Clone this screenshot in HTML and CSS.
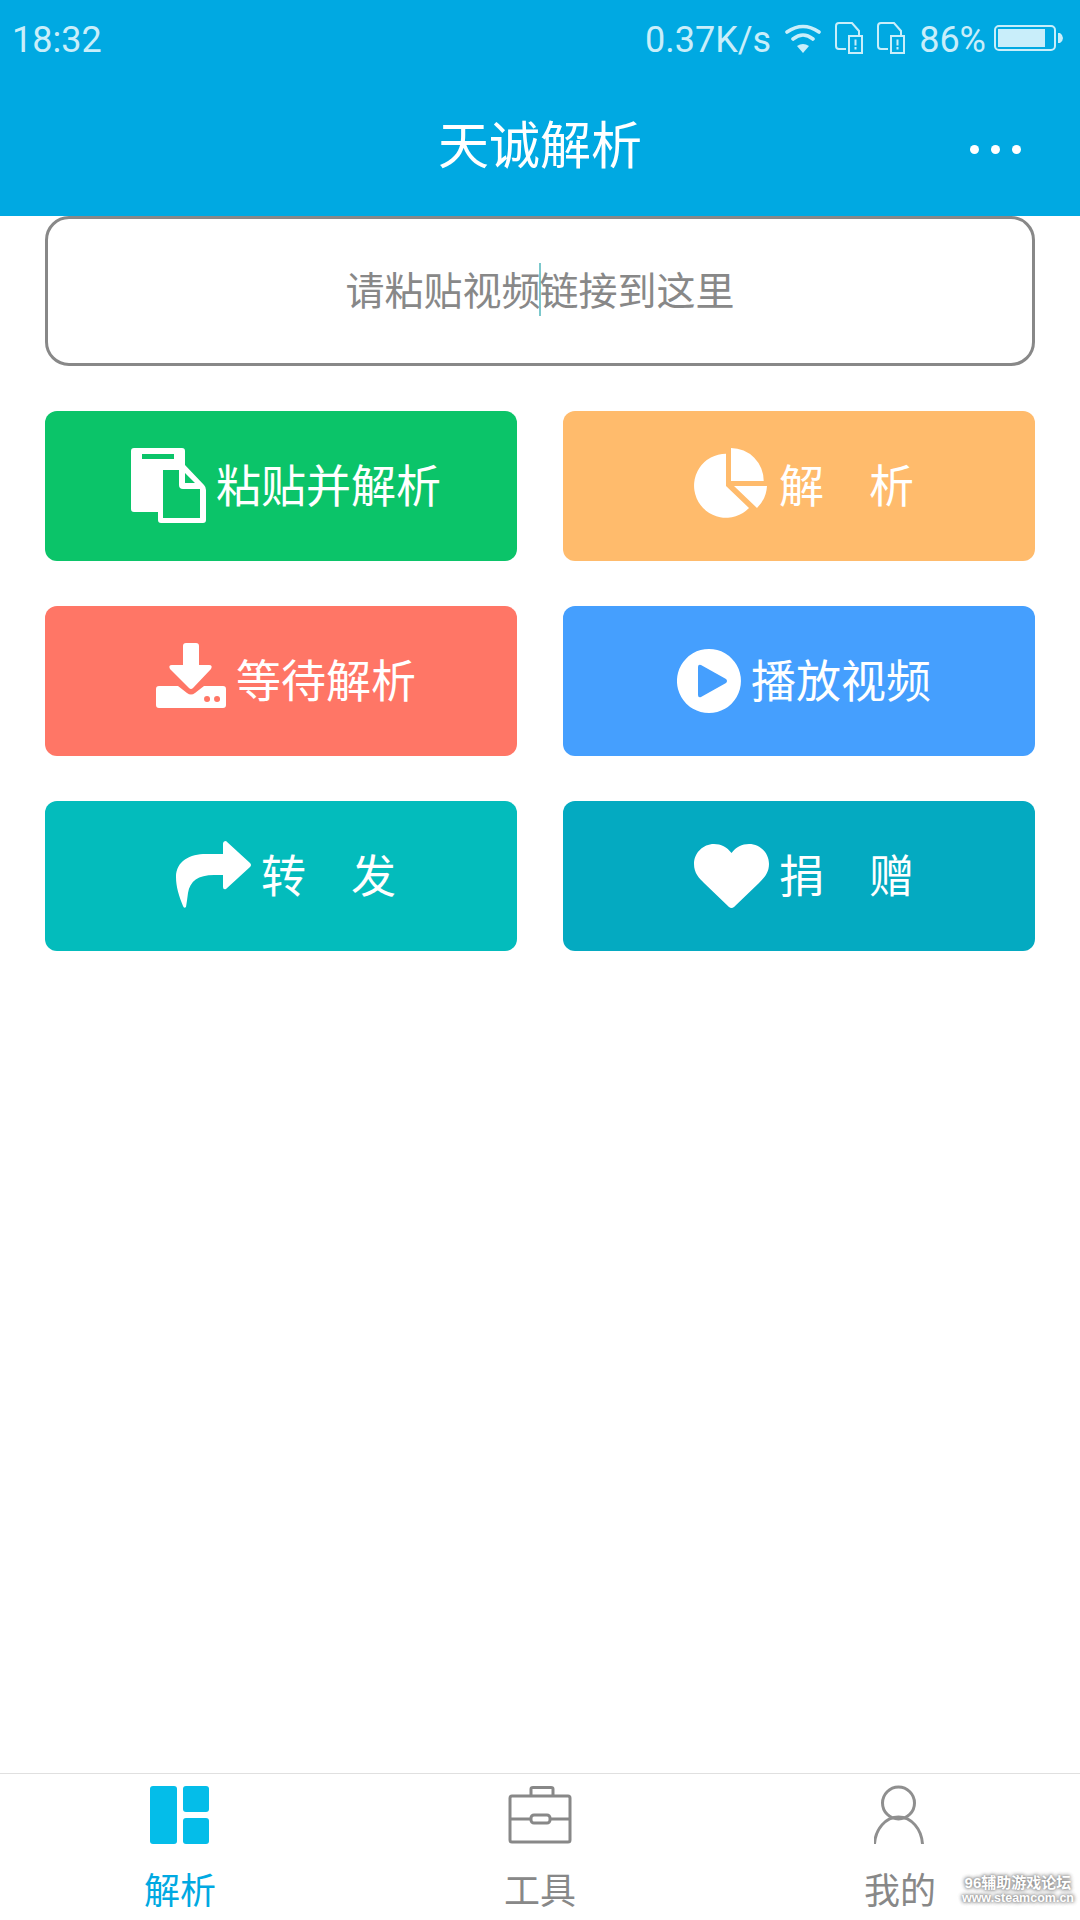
FILE: index.html
```html
<!DOCTYPE html>
<html lang="zh-CN">
<head>
    <meta charset="UTF-8">
    <meta name="viewport" content="width=device-width, initial-scale=1.0">
    <title>天诚解析</title>
    <link rel="stylesheet" href="styles.css">
</head>
<body>
    <div class="page">
        <header class="top">
            <div class="status">
                <span class="time">18:32</span>
                <div class="status-right">
                    <span>0.37K/s</span>
                    <svg class="wifi" width="36" height="29" viewBox="0 0 36 29">
                        <path d="M2 8Q18 -3 34 8M8 15Q18 7 28 15" fill="none" stroke="#c9eefa" stroke-width="3.6" stroke-linecap="round"/>
                        <path d="M12 22Q18 18 24 22L18 29Z" fill="#c9eefa"/>
                    </svg>
                    <svg class="sim" width="28" height="32" viewBox="0 0 28 32">
                        <path d="M11 27H4Q1 27 1 24V4Q1 1 4 1H17L24 9V13" fill="none" stroke="#c9eefa" stroke-width="2"/>
                        <rect x="14" y="14" width="13" height="17" fill="none" stroke="#c9eefa" stroke-width="2"/>
                        <path d="M19.500 17.500h2v6h-2zM19.500 25h2v2.500h-2z" fill="#c9eefa"/>
                    </svg>
                    <svg class="sim" width="28" height="32" viewBox="0 0 28 32">
                        <path d="M11 27H4Q1 27 1 24V4Q1 1 4 1H17L24 9V13" fill="none" stroke="#c9eefa" stroke-width="2"/>
                        <rect x="14" y="14" width="13" height="17" fill="none" stroke="#c9eefa" stroke-width="2"/>
                        <path d="M19.500 17.500h2v6h-2zM19.500 25h2v2.500h-2z" fill="#c9eefa"/>
                    </svg>
                    <span>86%</span>
                    <svg class="battery" width="69" height="26" viewBox="0 0 69 26">
                        <rect x="1" y="1" width="60" height="24" rx="4" fill="none" stroke="#c9eefa" stroke-width="2"/>
                        <rect x="4" y="4" width="47" height="18" fill="#c9eefa"/>
                        <path d="M64 8H66Q69 10 69 13Q69 16 66 18H64Z" fill="#c9eefa"/>
                    </svg>
                </div>
            </div>
            <div class="titlebar">
                <h1>天诚解析</h1>
                <div class="more"><i></i><i></i><i></i></div>
            </div>
        </header>

        <main class="content">
            <div class="link-box">
                <span class="hint">请粘贴视频<span class="caret"></span>链接到这里</span>
            </div>

            <div class="actions">
                <div class="action green">
                    <svg width="75" height="76" viewBox="0 0 75 76">
                        <path fill="#fff" fill-rule="evenodd" d="M3 0H51Q54 0 54 3V17L73 37Q75 39 75 42V72Q75 75 72 75H30Q27 75 27 72V64H3Q0 64 0 61V3Q0 0 3 0ZM11 6V11H43V6ZM32 22V70H69V41H52Q48 41 48 37V22ZM54 25V35H64Z"/>
                    </svg>
                    <span>粘贴并解析</span>
                </div>
                <div class="action orange">
                    <svg class="pie" width="73" height="70" viewBox="0 0 73 70">
                        <path fill="#fff" d="M32 5.700V38L55 60A32 32 0 1 1 32 5.700ZM37 0A32.700 32.700 0 0 1 69.700 33H37ZM40 38H73A33 33 0 0 1 63 60Z"/>
                    </svg>
                    <span>解　析</span>
                </div>
                <div class="action red">
                    <svg class="down" width="70" height="65" viewBox="0 0 70 65">
                        <path fill="#fff" fill-rule="evenodd" d="M30 0H40Q43 0 43 3V22H53Q57 22 55 26L37 45Q35 47 33 45L14 26Q12 22 16 22H27V3Q27 0 30 0ZM3 43H22L31 50Q35 53 39 50L48 43H67Q70 43 70 46V62Q70 65 67 65H3Q0 65 0 62V46Q0 43 3 43ZM51 53A3 3 0 1 0 51.100 59A3 3 0 1 0 51 53ZM61 53A3 3 0 1 0 61.100 59A3 3 0 1 0 61 53Z"/>
                    </svg>
                    <span>等待解析</span>
                </div>
                <div class="action blue">
                    <svg width="64" height="64" viewBox="0 0 64 64">
                        <path fill="#fff" fill-rule="evenodd" d="M32 0A32 32 0 1 1 31.900 0ZM24 16Q21 15 21 18V46Q21 49 24 48L49 34Q51 32 49 30Z"/>
                    </svg>
                    <span>播放视频</span>
                </div>
                <div class="action teal">
                    <svg class="share" width="75" height="67" viewBox="0 0 75 67">
                        <path fill="#fff" d="M47 3Q47 0 50 0L74 22Q76 24 74 26L50 48Q47 49 47 46V34H38C22 34 14 40 12 52Q11 60 10 66Q8 68 7 65C3 55 0 46 0 36C0 20 14 13 30 13H47Z"/>
                    </svg>
                    <span>转　发</span>
                </div>
                <div class="action cyan">
                    <svg width="75" height="65" viewBox="0 0 75 65">
                        <path fill="#fff" d="M37.500 9C42 3 48 0 55 0C66 0 75 9 75 20C75 29 70 34 65 39L40 63Q37.500 65 35 63L10 39C5 34 0 29 0 20C0 9 9 0 20 0C27 0 33 3 37.500 9Z"/>
                    </svg>
                    <span>捐　赠</span>
                </div>
            </div>
        </main>

        <nav class="tabs">
            <div class="tab active">
                <svg width="60" height="58" viewBox="0 0 60 58">
                    <rect x="0" y="0" width="27" height="58" rx="3" fill="#04bde9"/>
                    <rect x="33" y="0" width="26" height="26" rx="3" fill="#04bde9"/>
                    <rect x="33" y="32" width="26" height="26" rx="3" fill="#04bde9"/>
                </svg>
                <span>解析</span>
            </div>
            <div class="tab">
                <svg width="64" height="58" viewBox="0 0 64 58">
                    <g fill="none" stroke="#888" stroke-width="3">
                        <rect x="2" y="10" width="60" height="46" rx="2"/>
                        <path d="M23 10V3Q23 1.500 25 1.500H43Q45 1.500 45 3V10"/>
                        <path d="M2 33H23M42 33H62"/>
                        <rect x="23" y="29" width="19" height="8" rx="3"/>
                    </g>
                </svg>
                <span>工具</span>
            </div>
            <div class="tab">
                <svg width="52" height="60" viewBox="1.500 0 52 60">
                    <g fill="none" stroke="#8f8f8f" stroke-width="3">
                        <circle cx="26" cy="18" r="16"/>
                        <path d="M2 59C3 44 13 32 26 32C39 32 49 44 50 59"/>
                    </g>
                </svg>
                <span>我的</span>
            </div>
            <div class="mark">96辅助游戏论坛<small>www.steamcom.cn</small></div>
        </nav>
    </div>
</body>
</html>
```

FILE: styles.css
```css
* {
    box-sizing: border-box;
}
body {
    margin: 0;
    background: #fff;
    font-family: "Noto Sans CJK SC", Roboto, sans-serif;
}
.page {
    width: 1080px;
    height: 1920px;
    display: flex;
    flex-direction: column;
}

/* top bar */
.top {
    height: 216px;
    background: #00a9e2;
}
.status {
    height: 80px;
    padding: 0 17px 0 12px;
    display: flex;
    align-items: center;
    justify-content: space-between;
    color: #c9eefa;
    font-family: Roboto, sans-serif;
    font-size: 36px;
}
.status-right {
    display: flex;
    align-items: center;
    gap: 14px;
}
.status-right svg {
    margin-bottom: 4px;
}
.status-right .battery {
    margin-left: -6px;
}
.titlebar {
    height: 136px;
    display: grid;
    grid-template-columns: 1fr auto 1fr;
    align-items: center;
    color: #fff;
}
.titlebar h1 {
    grid-column: 2;
    margin: 0 0 10px;
    font-size: 51px;
    font-weight: 400;
    line-height: 1.2;
}
.more {
    grid-column: 3;
    justify-self: end;
    display: flex;
    gap: 12px;
    margin: 2px 59px 0 0;
}
.more i {
    width: 9px;
    height: 9px;
    border-radius: 50%;
    background: #fff;
}

/* link input + buttons */
.content {
    flex: 1;
    padding: 0 45px;
}
.link-box {
    height: 150px;
    padding-bottom: 6px;
    border: 3px solid #888;
    border-radius: 24px;
    display: flex;
    align-items: center;
    justify-content: center;
}
.hint {
    color: #888;
    font-size: 39px;
    display: flex;
    align-items: center;
}
.caret {
    width: 0;
    height: 53px;
    margin: 3px -1px 0 -2px;
    border-left: 2px solid #7cc8cc;
}
.actions {
    margin-top: 45px;
    display: grid;
    grid-template-columns: 472px 472px;
    justify-content: space-between;
    row-gap: 45px;
}
.action {
    height: 150px;
    padding-left: 10px;
    border-radius: 12px;
    display: flex;
    align-items: center;
    justify-content: center;
    gap: 10px;
    color: #fff;
    font-size: 45px;
}
.action span {
    margin-bottom: 6px;
}
.action .pie {
    margin: 0 2px 6px 0;
}
.action .down {
    margin-bottom: 11px;
}
.action .share {
    margin-bottom: 3px;
}
.green { background: #0bc469; }
.orange { background: #ffbb6c; }
.red { background: #ff7666; }
.blue { background: #459ffe; }
.teal { background: #03bcbc; }
.cyan { background: #04aac1; }

/* bottom tabs */
.tabs {
    position: relative;
    height: 147px;
    border-top: 1px solid #e0e0e0;
    display: grid;
    grid-template-columns: repeat(3, 1fr);
}
.tab {
    padding-top: 11px;
    display: flex;
    flex-direction: column;
    align-items: center;
    color: #888;
    font-size: 36px;
}
.tab svg {
    height: 60px;
}
.tab span {
    margin-top: 21px;
    line-height: 44px;
}
.tab.active {
    color: #00a9e2;
}
.mark {
    position: absolute;
    right: 6px;
    bottom: 15px;
    color: #fff;
    font-family: "Liberation Sans", "Noto Sans CJK SC", sans-serif;
    font-size: 15px;
    font-weight: 700;
    line-height: 17px;
    text-align: center;
    text-shadow: 0 0 4px #888, 0 0 4px #888, 0 0 2px #aaa;
}
.mark small {
    display: block;
    font-size: 12.5px;
    line-height: 14px;
}
```
